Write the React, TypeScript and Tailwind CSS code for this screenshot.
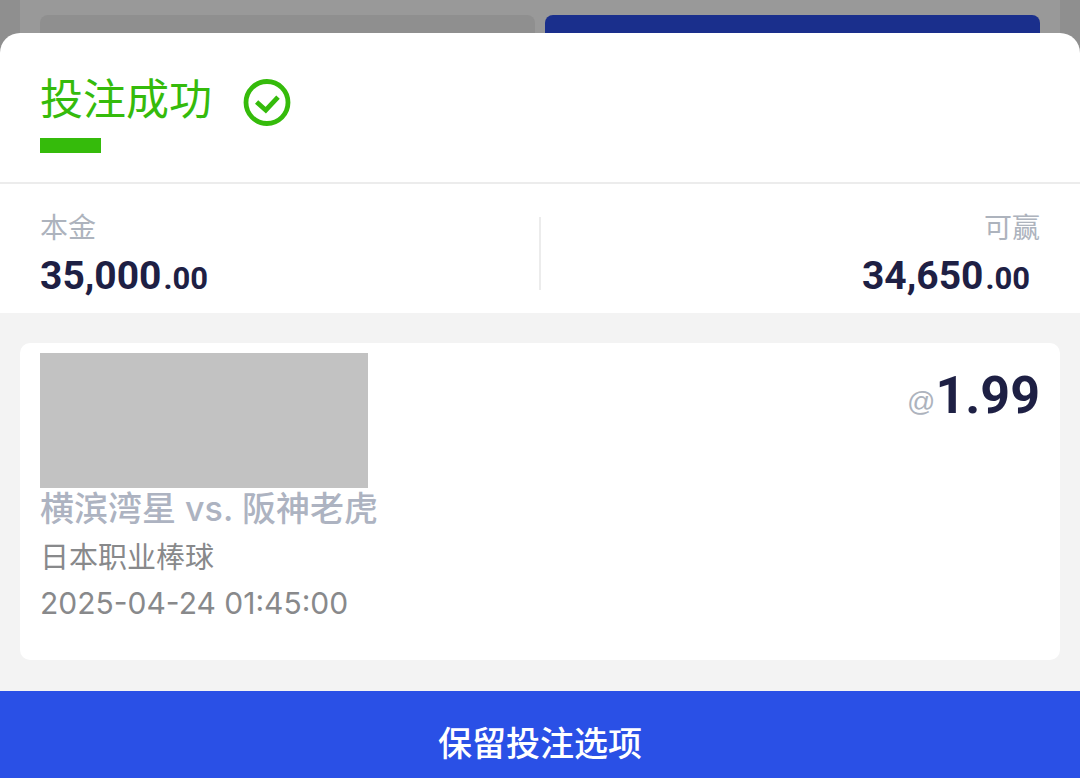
import React from "react";

type AmountProps = { whole: string; cents: string };

function Amount({ whole, cents }: AmountProps) {
  return (
    <span className="flex items-baseline gap-0.5 font-['Roboto',sans-serif] font-bold text-[#1e2044]">
      <span className="text-[39px] leading-[48px]">{whole}</span>
      <span className="text-[31px] leading-[44px]">{cents}</span>
    </span>
  );
}

function SuccessIcon() {
  return (
    <svg className="size-12" viewBox="0 0 48 48" fill="none" stroke="currentColor" aria-hidden="true">
      <circle cx="24" cy="23.5" r="21" strokeWidth="4.8" />
      <path d="M13.6 23 L22.8 31.2 L35 18.2" strokeWidth="4.8" />
    </svg>
  );
}

export default function App() {
  return (
    <div className="flex min-h-screen flex-col bg-[#f3f3f3] font-['Inter','Noto_Sans_CJK_SC',sans-serif]">
      <div className="bg-[#8f8f8f] px-5" aria-hidden="true">
        <div className="grid grid-cols-2 gap-2.5 bg-[#999999] px-5 pt-[15px]">
          <div className="h-10 rounded-t-lg bg-[#8f8f8f]" />
          <div className="h-10 rounded-t-lg bg-[#1a2f8c]" />
        </div>
      </div>

      <main className="relative -mt-[22px] flex grow flex-col">
        <header className="rounded-t-[20px] border-b-2 border-[#ececec] bg-white px-10 pt-9 pb-[29px]">
          <div className="flex items-center gap-[31px] text-[#35bb0b]">
            <h1 className="text-[43px] leading-[60px]">投注成功</h1>
            <div className="pt-2">
              <SuccessIcon />
            </div>
          </div>
          <div className="mt-[9px] h-[15px] w-[61px] bg-[#35bb0b]" />
        </header>

        <dl className="flex items-center justify-between bg-white px-10 pt-6 pb-2.5">
          <div className="flex-1">
            <dt className="text-[28px] leading-10 text-[#adb3bd]">本金</dt>
            <dd className="pt-1 pb-0.5">
              <Amount whole="35,000" cents=".00" />
            </dd>
          </div>
          <div className="mb-1 h-[73px] w-0.5 bg-[#ececec]" />
          <div className="flex flex-1 flex-col items-end">
            <dt className="text-[28px] leading-10 text-[#adb3bd]">可赢</dt>
            <dd className="pt-1 pr-2.5 pb-0.5">
              <Amount whole="34,650" cents=".00" />
            </dd>
          </div>
        </dl>

        <section className="grow px-5 py-[30px]">
          <div className="flex items-start justify-between rounded-[10px] bg-white px-5 pt-2.5 pb-9">
            <div>
              <div className="h-[135px] w-[328px] bg-[#c2c2c2]" />
              <h2 className="text-[34px] leading-[42px] font-medium text-[#adb3c1]">横滨湾星 vs. 阪神老虎</h2>
              <p className="pt-2 text-[29px] leading-10 text-[#88898b]">日本职业棒球</p>
              <p className="pt-1 text-[30px] leading-[42px] text-[#88898b]">2025-04-24 01:45:00</p>
            </div>
            <p className="flex items-center pt-3">
              <span className="pt-3 font-['Liberation_Sans',sans-serif] text-[28px] leading-10 text-[#adb3bd]">@</span>
              <span className="font-['Roboto',sans-serif] text-[52px] leading-[62px] font-bold text-[#1e2044]">1.99</span>
            </p>
          </div>
        </section>

        <button type="button" className="h-[87px] w-full bg-[#2a50e6] pt-[18px] text-[34px] leading-[50px] font-medium text-white">
          保留投注选项
        </button>
      </main>
    </div>
  );
}
